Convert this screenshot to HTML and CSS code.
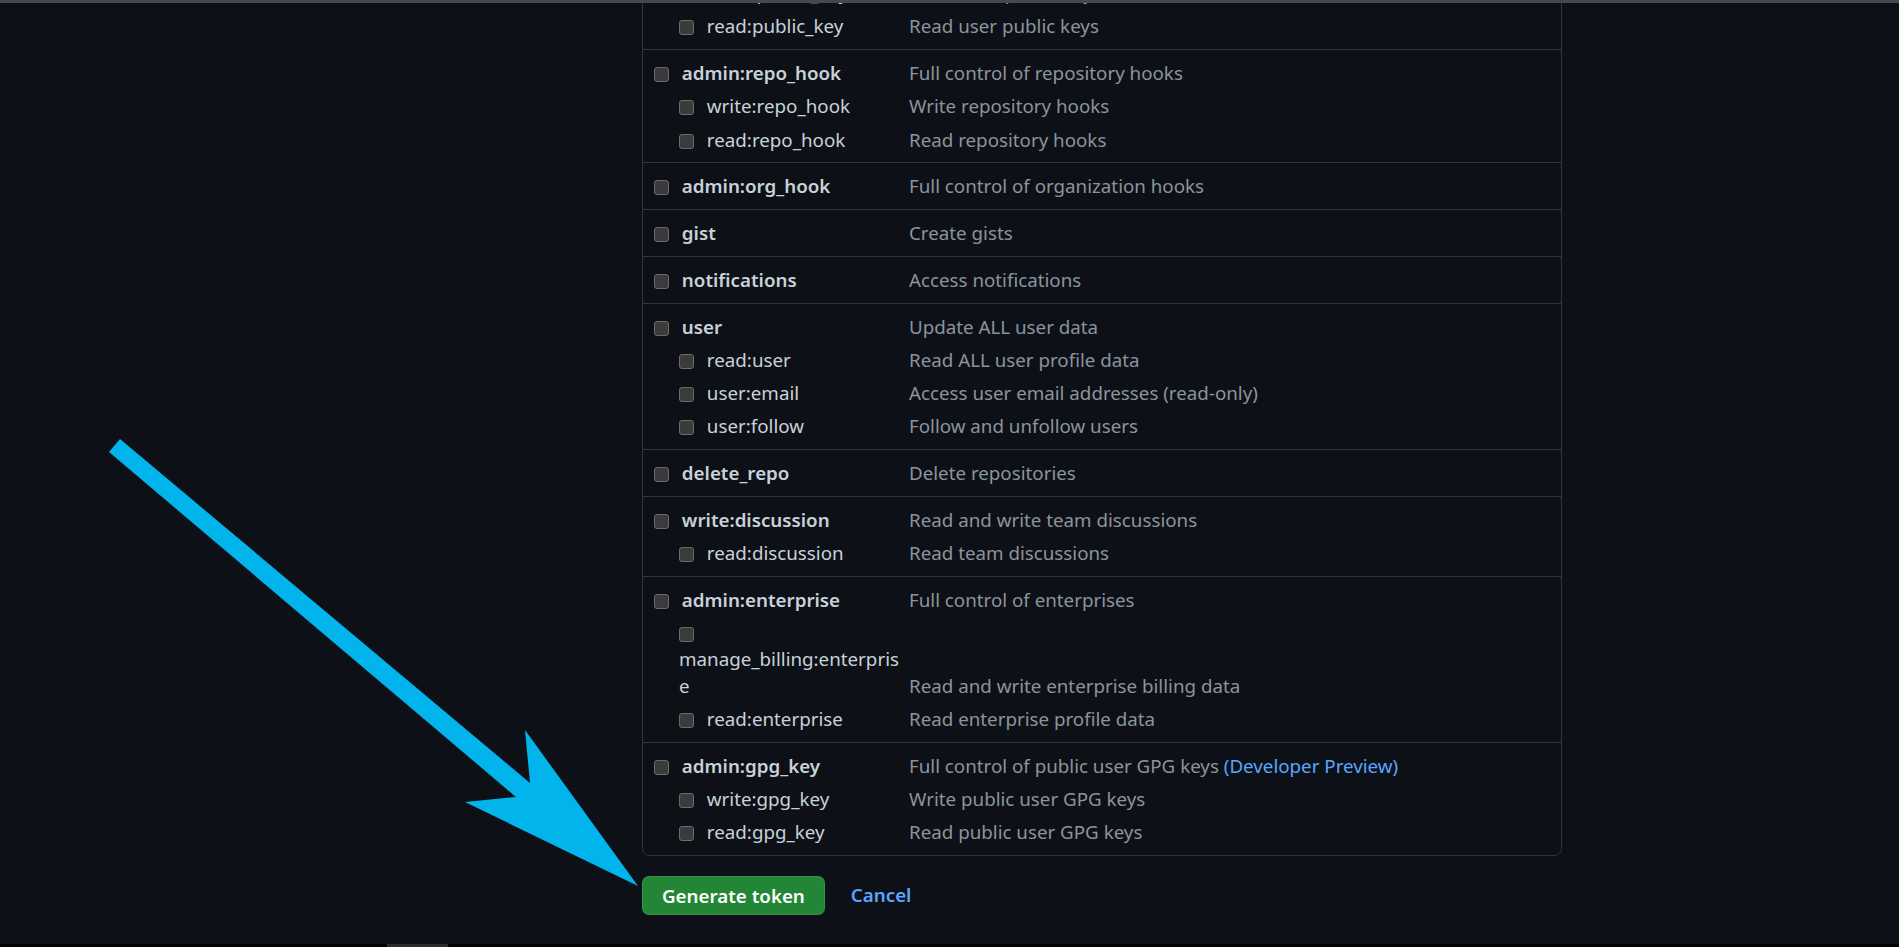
FILE: index.html
```html
<!DOCTYPE html>
<html lang="en">
  <head>
    <meta charset="UTF-8" />
    <meta name="viewport" content="width=device-width, initial-scale=1.0" />
    <title>New personal access token</title>
    <link rel="stylesheet" href="styles.css">
  </head>
  <body>
    <div class="window">
      <div class="topbar"></div>
      <div class="viewport">
        <div class="container">
          <div class="sidebar"></div>
          <div class="main">
            <div class="scopes">
              <div class="scope-group">
                <div class="scope-row">
                  <label class="scope-name"><input type="checkbox" /> admin:public_key</label>
                  <span class="scope-desc">Full control of user public keys</span>
                </div>
                <div class="scope-row sub">
                  <label class="scope-name"><input type="checkbox" /> write:public_key</label>
                  <span class="scope-desc">Write user public keys</span>
                </div>
                <div class="scope-row sub">
                  <label class="scope-name"><input type="checkbox" /> read:public_key</label>
                  <span class="scope-desc">Read user public keys</span>
                </div>
              </div>

              <div class="scope-group">
                <div class="scope-row">
                  <label class="scope-name"><input type="checkbox" /> admin:repo_hook</label>
                  <span class="scope-desc">Full control of repository hooks</span>
                </div>
                <div class="scope-row sub">
                  <label class="scope-name"><input type="checkbox" /> write:repo_hook</label>
                  <span class="scope-desc">Write repository hooks</span>
                </div>
                <div class="scope-row sub">
                  <label class="scope-name"><input type="checkbox" /> read:repo_hook</label>
                  <span class="scope-desc">Read repository hooks</span>
                </div>
              </div>

              <div class="scope-group">
                <div class="scope-row">
                  <label class="scope-name"><input type="checkbox" /> admin:org_hook</label>
                  <span class="scope-desc">Full control of organization hooks</span>
                </div>
              </div>

              <div class="scope-group">
                <div class="scope-row">
                  <label class="scope-name"><input type="checkbox" /> gist</label>
                  <span class="scope-desc">Create gists</span>
                </div>
              </div>

              <div class="scope-group">
                <div class="scope-row">
                  <label class="scope-name"><input type="checkbox" /> notifications</label>
                  <span class="scope-desc">Access notifications</span>
                </div>
              </div>

              <div class="scope-group">
                <div class="scope-row">
                  <label class="scope-name"><input type="checkbox" /> user</label>
                  <span class="scope-desc">Update ALL user data</span>
                </div>
                <div class="scope-row sub">
                  <label class="scope-name"><input type="checkbox" /> read:user</label>
                  <span class="scope-desc">Read ALL user profile data</span>
                </div>
                <div class="scope-row sub">
                  <label class="scope-name"><input type="checkbox" /> user:email</label>
                  <span class="scope-desc">Access user email addresses (read-only)</span>
                </div>
                <div class="scope-row sub">
                  <label class="scope-name"><input type="checkbox" /> user:follow</label>
                  <span class="scope-desc">Follow and unfollow users</span>
                </div>
              </div>

              <div class="scope-group">
                <div class="scope-row">
                  <label class="scope-name"><input type="checkbox" /> delete_repo</label>
                  <span class="scope-desc">Delete repositories</span>
                </div>
              </div>

              <div class="scope-group">
                <div class="scope-row">
                  <label class="scope-name"><input type="checkbox" /> write:discussion</label>
                  <span class="scope-desc">Read and write team discussions</span>
                </div>
                <div class="scope-row sub">
                  <label class="scope-name"><input type="checkbox" /> read:discussion</label>
                  <span class="scope-desc">Read team discussions</span>
                </div>
              </div>

              <div class="scope-group">
                <div class="scope-row">
                  <label class="scope-name"><input type="checkbox" /> admin:enterprise</label>
                  <span class="scope-desc">Full control of enterprises</span>
                </div>
                <div class="scope-row sub">
                  <label class="scope-name"><input type="checkbox" /> manage_billing:enterprise</label>
                  <span class="scope-desc">Read and write enterprise billing data</span>
                </div>
                <div class="scope-row sub">
                  <label class="scope-name"><input type="checkbox" /> read:enterprise</label>
                  <span class="scope-desc">Read enterprise profile data</span>
                </div>
              </div>

              <div class="scope-group">
                <div class="scope-row">
                  <label class="scope-name"><input type="checkbox" /> admin:gpg_key</label>
                  <span class="scope-desc">Full control of public user GPG keys <a href="#">(Developer Preview)</a></span>
                </div>
                <div class="scope-row sub">
                  <label class="scope-name"><input type="checkbox" /> write:gpg_key</label>
                  <span class="scope-desc">Write public user GPG keys</span>
                </div>
                <div class="scope-row sub">
                  <label class="scope-name"><input type="checkbox" /> read:gpg_key</label>
                  <span class="scope-desc">Read public user GPG keys</span>
                </div>
              </div>
            </div>

            <div class="form-actions">
              <button class="btn-primary" type="submit">Generate token</button>
              <a class="btn-link" href="#">Cancel</a>
            </div>
          </div>
        </div>
      </div>
      <div class="bottombar"><span class="thumb"></span></div>

      <svg class="arrow" width="1899" height="947" viewBox="0 0 1899 947">
        <polygon points="120,439 530,783 525,730 638,886 465,802 516,797 109,452" fill="#01b5ec" />
      </svg>
    </div>
  </body>
</html>
```

FILE: styles.css
```css
body {
  margin: 0;
  background-color: #0d1117;
  font-family: "Noto Sans", "Open Sans", sans-serif;
  font-size: 18.75px;
  line-height: 26.25px;
  color: #c9d1d9;
  -webkit-font-smoothing: antialiased;
}

.window {
  position: relative;
  display: flex;
  flex-direction: column;
  height: 947px;
  overflow: hidden;
}

.topbar {
  height: 3px;
  background-color: #484848;
  flex-shrink: 0;
  position: relative;
  z-index: 2;
}

.viewport {
  flex: 1;
  overflow: hidden;
}

.container {
  display: flex;
  width: 1265px;
  margin: -67.25px auto 0;
  padding: 0 20px;
  box-sizing: border-box;
}

.sidebar {
  flex: 0 0 305px;
}

.main {
  flex: 1;
}

.scopes {
  border: 1px solid #30363d;
  border-radius: 7.5px;
}

.scope-group {
  padding: 10px 12px 9.5px 11px;
  border-top: 1px solid #30363d;
}

.scope-group:first-child {
  border-top: none;
}

.scope-row {
  display: grid;
  grid-template-columns: 249px 1fr;
  column-gap: 6px;
  align-items: end;
}

.scope-row.sub {
  margin-top: 7px;
}

.scope-name {
  font-weight: 600;
  overflow-wrap: break-word;
}

.sub .scope-name {
  padding-left: 25px;
  font-weight: 400;
}

.scope-name input {
  appearance: none;
  -webkit-appearance: none;
  display: inline-block;
  width: 15px;
  height: 15px;
  margin: 0 8px 0 0;
  vertical-align: -2px;
  box-sizing: border-box;
  border: 1px solid #6b6b6b;
  border-radius: 3px;
  background-color: #3b3b3b;
}

.scope-desc {
  color: #8b949e;
}

.scope-desc a {
  color: #58a6ff;
  text-decoration: none;
}

.form-actions {
  display: flex;
  align-items: center;
  gap: 26px;
  margin-top: 20px;
}

.btn-primary {
  height: 39px;
  padding: 0 19px;
  border: 1px solid rgba(240, 246, 252, 0.1);
  border-radius: 7px;
  background-color: #238636;
  color: #fff;
  font-family: inherit;
  font-size: 18.75px;
  font-weight: 600;
  cursor: pointer;
}

.btn-link {
  color: #58a6ff;
  font-weight: 600;
  text-decoration: none;
}

.bottombar {
  height: 3px;
  flex-shrink: 0;
  background-color: #000;
}

.thumb {
  display: block;
  width: 61px;
  height: 3px;
  margin-left: 387px;
  background-color: #2b2b2b;
}

.arrow {
  position: absolute;
  top: 0;
  left: 0;
  pointer-events: none;
}
```
